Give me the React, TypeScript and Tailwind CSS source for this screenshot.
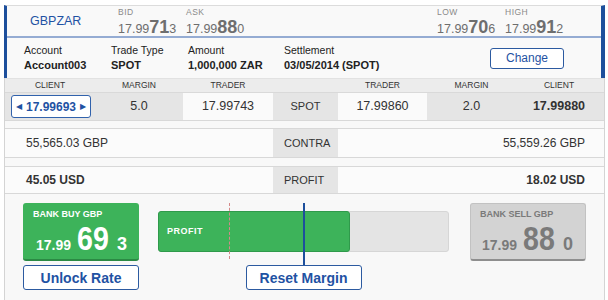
import React from "react";

const Price = ({ a, b, c }: { a: string; b: string; c: string }) => (
  <div className="flex items-baseline text-[#6e6e6e] leading-none">
    <span className="text-[12.5px]">{a}</span>
    <span className="text-[18px] font-bold">{b}</span>
    <span className="text-[12.5px]">{c}</span>
  </div>
);

const Stat = ({ label, a, b, c, w }: { label: string; a: string; b: string; c: string; w: string }) => (
  <div className={`flex flex-col ${w} pt-[2px]`}>
    <div className="text-[8.5px] tracking-[0.5px] text-[#8a8a8a] leading-none mb-[2px]">{label}</div>
    <Price a={a} b={b} c={c} />
  </div>
);

const Field = ({ label, value, w }: { label: string; value: string; w: string }) => (
  <div className={`flex flex-col ${w}`}>
    <div className="text-[10.5px] text-[#222] leading-none mb-[5px]">{label}</div>
    <div className="text-[11px] font-bold text-[#222] leading-none">{value}</div>
  </div>
);

const Big = ({ v }: { v: string }) => (
  <span className="inline-block origin-left scale-x-[0.84] mr-[-6px] text-[34px] font-bold">{v}</span>
);

export default function App() {
  return (
    <div className="w-[608px] h-[300px] bg-white pt-[5px] pl-[4px] font-['Liberation_Sans',Arial,sans-serif] overflow-hidden">
      <div className="w-[601px] h-[295px] flex flex-col bg-[#f8f8f8]">
        {/* Header */}
        <div className="border-t border-[#dcdcdc] border-l-[3px] border-l-[#1d4f9c] border-r-[4px] border-r-[#1d4f9c] bg-[#f9f9f9]">
          <div className="h-[30px] flex items-center pl-[23px]">
            <div className="w-[88px] text-[12.5px] text-[#1f52a3]">GBPZAR</div>
            <Stat label="BID" a="17.99" b="71" c="3" w="w-[68px]" />
            <Stat label="ASK" a="17.99" b="88" c="0" w="w-[68px]" />
            <div className="flex-1" />
            <Stat label="LOW" a="17.99" b="70" c="6" w="w-[68px]" />
            <Stat label="HIGH" a="17.99" b="91" c="2" w="w-[96px]" />
          </div>
          <div className="h-[2px] bg-[#95acd3]" />
          <div className="h-[40px] flex items-center pl-[17px]">
            <Field label="Account" value="Account003" w="w-[87px]" />
            <Field label="Trade Type" value="SPOT" w="w-[77px]" />
            <Field label="Amount" value="1,000,000 ZAR" w="w-[96px]" />
            <Field label="Settlement" value="03/05/2014 (SPOT)" w="w-[150px]" />
            <div className="flex-1" />
            <button className="mr-[37px] w-[74px] h-[21px] rounded-[3px] border border-[#2c5aa0] bg-white text-[12px] text-[#1f52a3] leading-none">
              Change
            </button>
          </div>
        </div>

        {/* Lower section */}
        <div className="flex-1 flex flex-col border-x border-[#d4d4d4]">
          <div className="h-[14px] grid grid-cols-[90px_88px_90px_65px_89px_89px_86px] bg-[#ececec] border-t border-[#e2e2e2] text-[8.5px] text-[#333] items-center text-center leading-none">
            <div>CLIENT</div>
            <div>MARGIN</div>
            <div>TRADER</div>
            <div></div>
            <div>TRADER</div>
            <div>MARGIN</div>
            <div>CLIENT</div>
          </div>
          <div className="h-[29px] grid grid-cols-[90px_88px_90px_65px_89px_89px_86px] bg-[#e5e5e5] border-t border-[#d9d9d9] border-b border-b-[#d8d8d8] text-[12.5px] text-[#333] items-stretch text-center">
            <div className="flex items-center pl-[6px]">
              <div className="w-[80px] h-[23px] bg-white border border-[#3162ac] rounded-[3px] flex items-center justify-between px-[4px] text-[#1f52a3]">
                <span className="text-[8px]">◀</span>
                <span className="font-bold text-[12px]">17.99693</span>
                <span className="text-[8px]">▶</span>
              </div>
            </div>
            <div className="flex items-center justify-center">5.0</div>
            <div className="flex items-center justify-center bg-[#fafafa]">17.99743</div>
            <div className="flex items-center justify-center text-[11px]">SPOT</div>
            <div className="flex items-center justify-center bg-[#fafafa]">17.99860</div>
            <div className="flex items-center justify-center">2.0</div>
            <div className="flex items-center justify-center font-bold text-[12.5px]">17.99880</div>
          </div>
          <div className="h-[7px]" />
          <div className="h-[30px] flex border-y border-[#d8d8d8] bg-[#fbfbfb] text-[12px] text-[#333]">
            <div className="w-[268px] flex items-center pl-[21px]">55,565.03 GBP</div>
            <div className="w-[65px] bg-[#e5e5e5] flex items-center pl-[11px] text-[11px]">CONTRA</div>
            <div className="flex-1 flex items-center justify-end pr-[19px]">55,559.26 GBP</div>
          </div>
          <div className="h-[8px]" />
          <div className="h-[28px] flex border-y border-[#d8d8d8] bg-[#fbfbfb] text-[12px] text-[#333]">
            <div className="w-[268px] flex items-center pl-[21px] font-bold">45.05 USD</div>
            <div className="w-[65px] bg-[#e5e5e5] flex items-center pl-[11px] text-[11px]">PROFIT</div>
            <div className="flex-1 flex items-center justify-end pr-[19px] font-bold">18.02 USD</div>
          </div>

          {/* Bottom area */}
          <div className="flex pl-[18px] pt-[9px]">
            <div className="w-[116px] flex flex-col">
              <div className="h-[58px] rounded-[3px] bg-[#3db35a] border-b-2 border-[#2b8a44] text-white pt-[7px]">
                <div className="pl-[10px] text-[9px] font-bold leading-none">BANK BUY GBP</div>
                <div className="flex items-baseline pl-[13px] mt-[2px] leading-none">
                  <span className="text-[14px] font-bold">17.99</span>
                  <span className="ml-[6px]"><Big v="69" /></span>
                  <span className="ml-[8px] text-[18px] font-bold">3</span>
                </div>
              </div>
              <button className="mt-[4px] h-[25px] rounded-[3px] border border-[#2c5aa0] bg-white text-[14px] font-bold text-[#1f52a3] leading-none">
                Unlock Rate
              </button>
            </div>

            <div className="relative ml-[19px] w-[291px] flex flex-col items-center">
              <div className="mt-[8px] w-full h-[41px] rounded-[3px] bg-[#e4e4e4] border border-[#d6d6d6] flex">
                <div className="w-[182px] h-full -my-px -ml-px box-content border border-[#2f9a4b] bg-[#3db35a] rounded-[3px] flex items-center pl-[8px] text-[9px] font-bold tracking-[0.5px] text-white">
                  PROFIT
                </div>
              </div>
              <button className="mt-[13px] w-[116px] h-[25px] rounded-[3px] border border-[#2c5aa0] bg-white text-[14px] font-bold text-[#1f52a3] leading-none">
                Reset Margin
              </button>
              <div className="absolute left-[71px] top-0 h-[56px] border-l border-dashed border-[#d58a8a]" />
              <div className="absolute left-[145px] top-0 h-[62px] w-[2px] bg-[#1d4f9c]" />
            </div>

            <div className="ml-[21px] w-[116px]">
              <div className="h-[58px] rounded-[3px] bg-[#d3d3d3] border border-[#c2c2c2] border-b-2 border-b-[#8e8e8e] text-[#7a7a7a] pt-[6px]">
                <div className="pl-[9px] text-[9px] font-bold leading-none">BANK SELL GBP</div>
                <div className="flex items-baseline pl-[11px] mt-[2px] leading-none">
                  <span className="text-[14px] font-bold">17.99</span>
                  <span className="ml-[6px]"><Big v="88" /></span>
                  <span className="ml-[8px] text-[18px] font-bold">0</span>
                </div>
              </div>
            </div>
          </div>
        </div>
      </div>
    </div>
  );
}
